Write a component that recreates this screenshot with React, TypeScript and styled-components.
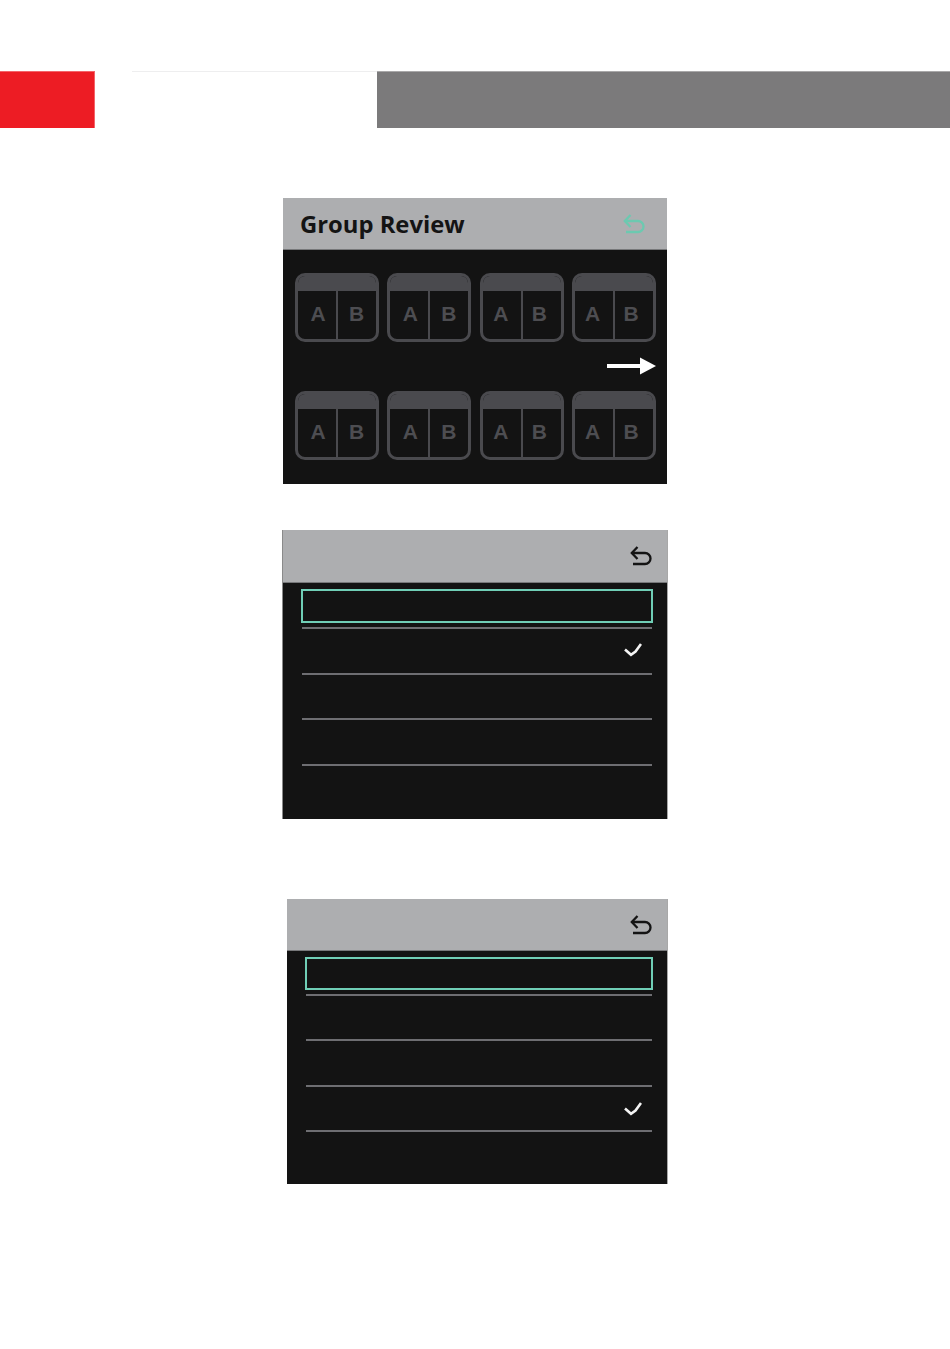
import React from "react";
import styled, { createGlobalStyle } from "styled-components";

const GlobalStyle = createGlobalStyle`
  html, body {
    margin: 0;
    padding: 0;
    background: #fff;
  }
`;

const Page = styled.div`
  width: 950px;
  height: 1349px;
  padding-top: 71px;
  box-sizing: border-box;
  overflow: hidden;
`;

const Band = styled.div`
  display: flex;
  height: 57px;
`;

const RedBlock = styled.div`
  width: 95px;
  box-sizing: border-box;
  background: #ed1c24;
  border-top: 1px solid #f4646a;
  border-right: 1px solid #f4646a;
`;

const BlankBlock = styled.div`
  width: 245px;
  margin-left: 37px;
  border-top: 1px solid #eeeeef;
`;

const GreyBlock = styled.div`
  flex: 1;
  background: #7b7a7b;
  border-top: 1px solid #a9a8a9;
`;

const Stack = styled.div`
  display: flex;
  flex-direction: column;
  align-items: flex-end;
  padding-right: 283px;
`;

const Panel = styled.section<{ $top: number; $width: number; $height: number; $edged?: boolean; $leftEdge?: boolean }>`
  width: ${(props) => props.$width}px;
  height: ${(props) => props.$height}px;
  margin-top: ${(props) => props.$top}px;
  display: flex;
  flex-direction: column;
  box-sizing: border-box;
  background: #131313;
  border-left: ${(props) => (props.$leftEdge ? "1px solid #8a8a8a" : "0")};
  box-shadow: ${(props) => (props.$edged ? "1px 0 0 #a8a8a8" : "none")};
`;

const Header = styled.header<{ $height: number; $iconGap: number }>`
  height: ${(props) => props.$height}px;
  flex: none;
  display: flex;
  align-items: center;
  justify-content: space-between;
  padding: 0 ${(props) => props.$iconGap}px 0 17px;
  background: #adaeb0;
  border-bottom: 1px solid #77787a;
  box-sizing: border-box;
`;

const Title = styled.h2`
  margin: 2px 0 0;
  font: 700 23.8px/1 "Open Sans", sans-serif;
  color: #141414;
`;

const IconBox = styled.svg<{ $accent?: boolean }>`
  width: 22px;
  height: 20px;
  margin-left: auto;
  color: ${(props) => (props.$accent ? "#6cc9b0" : "#141414")};
`;

const GroupBody = styled.div`
  flex: 1;
  padding: 23px 11px 0 12px;
`;

const TileRow = styled.div`
  display: grid;
  grid-template-columns: repeat(4, 84px);
  justify-content: space-between;
`;

const Tile = styled.div`
  height: 69px;
  display: flex;
  flex-direction: column;
  box-sizing: border-box;
  border: 3px solid #4a4a4e;
  border-radius: 10px;
  overflow: hidden;
`;

const TileTop = styled.div`
  height: 15px;
  flex: none;
  background: #4a4a4e;
`;

const TileCells = styled.div`
  flex: 1;
  display: grid;
  grid-template-columns: 38px 1fr;
`;

const TileCell = styled.div`
  display: flex;
  align-items: center;
  justify-content: center;
  padding: 0 0 4px 2px;
  font: 700 21px/1 "Liberation Sans", sans-serif;
  color: #4d4d51;
  & + & {
    padding: 0 1px 4px 0;
    border-left: 2px solid #4a4a4e;
  }
`;

const Letter = styled.span<{ $shift: number }>`
  transform: translateX(${(props) => props.$shift}px);
`;

const ArrowRow = styled.div`
  height: 49px;
  box-sizing: border-box;
  padding-bottom: 2px;
  display: flex;
  align-items: center;
  justify-content: flex-end;
`;

const ListBody = styled.div<{ $inset: number }>`
  flex: 1;
  padding: 6px 14px 0 ${(props) => props.$inset}px;
`;

const Highlight = styled.div<{ $height: number }>`
  height: ${(props) => props.$height}px;
  margin-bottom: 4px;
  box-sizing: border-box;
  border: 2px solid #70ceb6;
`;

const Row = styled.div<{ $pitch: number; $drop?: number }>`
  height: ${(props) => props.$pitch}px;
  display: flex;
  align-items: center;
  justify-content: flex-end;
  box-sizing: border-box;
  margin: 0 1px;
  padding: ${(props) => props.$drop ?? 0}px 10px 0 0;
  border-bottom: 2px solid #6e6e72;
`;

const Arrow = () => (
  <svg width="49" height="18" viewBox="0 0 49 18">
    <rect x="0" y="7" width="34" height="4" fill="#fff" />
    <polygon points="33,0.5 49,9 33,17.5" fill="#fff" />
  </svg>
);

const CheckMark = styled.svg`
  width: 18px;
  height: 14px;
  margin-bottom: 2px;
`;

const Check = () => (
  <CheckMark viewBox="0 0 18 14">
    <path d="M1 6.5 L7 11.8 L11.5 8.5 L17 1" fill="none" stroke="#f4f4f4" strokeWidth="2.6" />
  </CheckMark>
);

const BackIcon = ({ accent }: { accent?: boolean }) => (
  <IconBox $accent={accent} viewBox="0 0 22 20" fill="none" stroke="currentColor" strokeWidth="2.3">
    <path d="M7.5 1 L1.8 7 L7.5 13" />
    <path d="M1.8 7 H15 a5.2 5.2 0 0 1 0 11 H3" />
  </IconBox>
);

const letterShifts = [0, 0, -1.7, -2.5];

const Tiles = () => (
  <TileRow>
    {letterShifts.map((shift, i) => (
      <Tile key={i}>
        <TileTop />
        <TileCells>
          <TileCell>
            <Letter $shift={shift}>A</Letter>
          </TileCell>
          <TileCell>
            <Letter $shift={shift}>B</Letter>
          </TileCell>
        </TileCells>
      </Tile>
    ))}
  </TileRow>
);

interface ListPanelProps {
  top: number;
  width: number;
  height: number;
  headerHeight: number;
  inset: number;
  boxHeight: number;
  pitch: number;
  checked: number;
  drop: number;
  leftEdge?: boolean;
}

const ListPanel = ({ top, width, height, headerHeight, inset, boxHeight, pitch, checked, drop, leftEdge }: ListPanelProps) => (
  <Panel $top={top} $width={width} $height={height} $edged $leftEdge={leftEdge}>
    <Header $height={headerHeight} $iconGap={15}>
      <BackIcon />
    </Header>
    <ListBody $inset={inset}>
      <Highlight $height={boxHeight} />
      <Row $pitch={2} />
      {[0, 1, 2].map((i) => (
        <Row key={i} $pitch={pitch} $drop={drop}>
          {i === checked && <Check />}
        </Row>
      ))}
    </ListBody>
  </Panel>
);

export default function App() {
  return (
    <Page>
      <GlobalStyle />
      <Band>
        <RedBlock />
        <BlankBlock />
        <GreyBlock />
      </Band>
      <Stack>
        <Panel $top={70} $width={384} $height={286}>
          <Header $height={52} $iconGap={22}>
            <Title>Group Review</Title>
            <BackIcon accent />
          </Header>
          <GroupBody>
            <Tiles />
            <ArrowRow>
              <Arrow />
            </ArrowRow>
            <Tiles />
          </GroupBody>
        </Panel>
        <ListPanel top={46} width={385} height={289} headerHeight={53} inset={18} boxHeight={34} pitch={45.6} checked={0} drop={0} leftEdge />
        <ListPanel top={80} width={380} height={285} headerHeight={52} inset={18} boxHeight={33} pitch={45.3} checked={2} drop={4} />
      </Stack>
    </Page>
  );
}
